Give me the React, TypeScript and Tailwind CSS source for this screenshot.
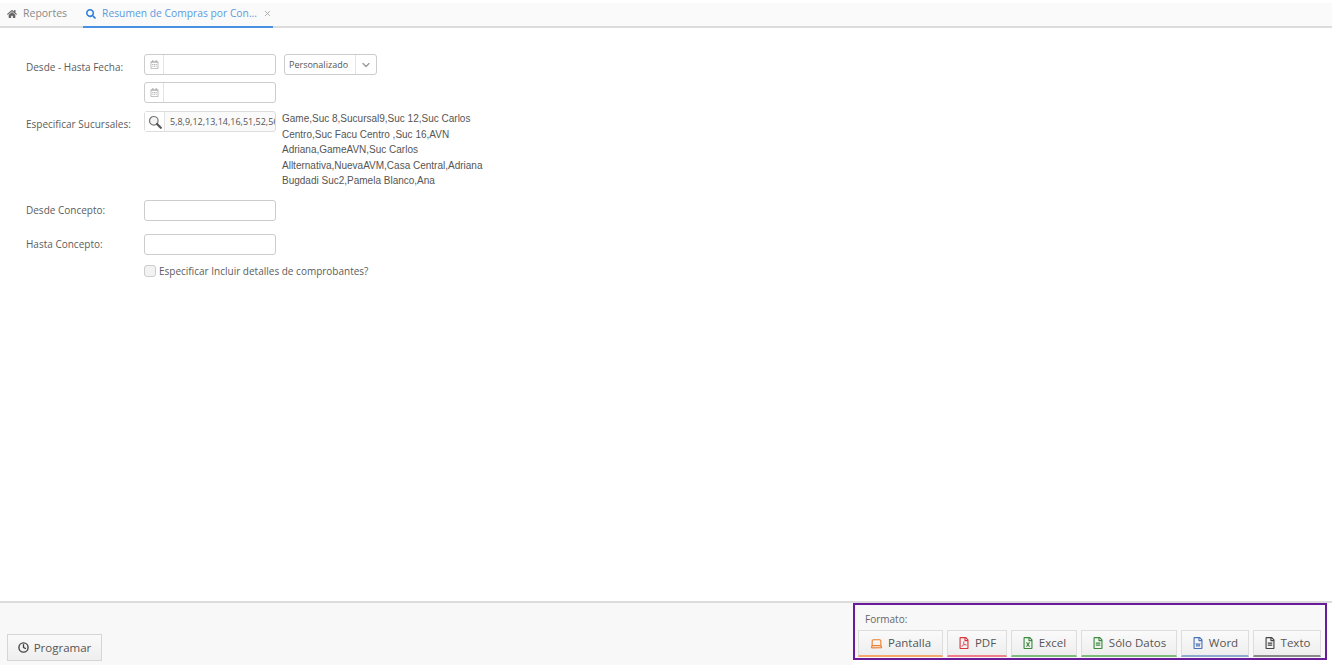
import { ChevronDown, Clock, Laptop, X } from "lucide-react"
import { FaHome, FaRegCalendarAlt, FaRegFileAlt, FaRegFileExcel, FaRegFilePdf, FaRegFileWord, FaSearch } from "react-icons/fa"

function DateInput() {
  return (
    <div className="flex h-[21px] w-[132px] rounded-[3px] border border-[#ccc] bg-white">
      <div className="flex w-[19px] items-center justify-center border-r border-[#e3e3e3]">
        <FaRegCalendarAlt className="h-[9px] w-[9px] text-[#b0b0b0]" />
      </div>
    </div>
  )
}

function FormatButton({ label, icon, line, width }: { label: string; icon: React.ReactNode; line: string; width: string }) {
  return (
    <div className={`flex h-[27px] items-center justify-center gap-[5px] border border-[#ddd] border-b-2 bg-gradient-to-b from-[#fafafa] to-[#eeeeee] text-[11.5px] text-[#555] ${line} ${width}`}>
      {icon}
      <span>{label}</span>
    </div>
  )
}

export default function App() {
  const labelCls = "text-[10px] leading-[14px] text-[#5c5c5c]"

  return (
    <div className="flex h-[670px] flex-col bg-white font-['Open_Sans',sans-serif]">
      <div className="mt-[3px] flex h-[25px] items-stretch border-b-2 border-[#dcdcdc] bg-[#fafafa] pb-[2px] text-[10.5px]">
        <div className="flex items-center gap-[6px] pl-[7px] pr-[16px] text-[#8a8a8a]">
          <FaHome className="h-[10px] w-[10px] text-[#666]" />
          <span>Reportes</span>
        </div>
        <div className="-mb-[4px] flex w-[190px] items-center gap-[6px] whitespace-nowrap border-b-2 border-[#4a90e2] pb-[2px] pl-[3px] text-[#5c9ae0]">
          <FaSearch className="h-[10px] w-[10px] text-[#2f7fd8]" />
          <span className="w-[155px] text-[10.3px]">Resumen de Compras por Con...</span>
          <X className="h-[9px] w-[9px] text-[#999]" />
        </div>
      </div>

      <div className="flex-1 pl-[26px] pt-[26px]">
        <div className="flex">
          <div className={`${labelCls} w-[118px] pt-[6px]`}>Desde - Hasta Fecha:</div>
          <div className="flex flex-col gap-[7px]">
            <div className="flex gap-[8px]">
              <DateInput />
              <div className="flex h-[21px] w-[93px] items-center rounded-[3px] border border-[#ccc] bg-white text-[9px] text-[#555]">
                <span className="flex-1 pl-[4px]">Personalizado</span>
                <div className="flex h-full w-[21px] items-center justify-center border-l border-[#e3e3e3]">
                  <ChevronDown className="h-[12px] w-[12px] text-[#999]" strokeWidth={2.5} />
                </div>
              </div>
            </div>
            <DateInput />
          </div>
        </div>

        <div className="mt-[8px] flex">
          <div className={`${labelCls} w-[118px] pt-[6px]`}>Especificar Sucursales:</div>
          <div className="flex h-[21px] w-[132px] rounded-[3px] border border-[#ddd] bg-[#fafafa]">
            <div className="flex w-[20px] items-center justify-center border-r border-[#e3e3e3] bg-white">
              <svg viewBox="0 0 14 14" className="h-[14px] w-[14px]">
                <circle cx="5.8" cy="5.8" r="4.3" fill="#f4f4f4" stroke="#777" strokeWidth="1.2" />
                <path d="M9 9 L12.8 12.8" stroke="#555" strokeWidth="2.2" strokeLinecap="round" />
              </svg>
            </div>
            <div className="flex-1 overflow-hidden whitespace-nowrap pl-[5px] pt-[3px] text-[9px] leading-[14px] text-[#555]">
              5,8,9,12,13,14,16,51,52,56
            </div>
          </div>
          <div className="ml-[6px] w-[205px] font-['Liberation_Sans',sans-serif] text-[10px] leading-[15.5px] text-[#555]">
            Game,Suc 8,Sucursal9,Suc 12,Suc Carlos Centro,Suc Facu Centro ,Suc 16,AVN Adriana,GameAVN,Suc Carlos Allternativa,NuevaAVM,Casa Central,Adriana Bugdadi Suc2,Pamela Blanco,Ana
          </div>
        </div>

        <div className="mt-[11px] flex items-center">
          <div className={`${labelCls} w-[118px]`}>Desde Concepto:</div>
          <div className="h-[21px] w-[132px] rounded-[3px] border border-[#ccc] bg-white" />
        </div>

        <div className="mt-[13px] flex items-center">
          <div className={`${labelCls} w-[118px]`}>Hasta Concepto:</div>
          <div className="h-[21px] w-[132px] rounded-[3px] border border-[#ccc] bg-white" />
        </div>

        <div className="ml-[118px] mt-[9px] flex items-center gap-[3px]">
          <div className="h-[12px] w-[12px] rounded-[3px] border border-[#ccc] bg-[#f2f2f2]" />
          <span className={labelCls}>Especificar Incluir detalles de comprobantes?</span>
        </div>
      </div>

      <div className="mb-[5px] flex h-[64px] items-stretch justify-between border-t-2 border-[#dcdcdc] bg-[#f8f8f8]">
        <div className="mb-[4px] ml-[7px] mt-auto flex h-[27px] w-[95px] items-center justify-center gap-[5px] border border-[#d5d5d5] bg-gradient-to-b from-[#fafafa] to-[#eeeeee] text-[11.5px] text-[#555]">
          <Clock className="h-[11px] w-[11px] text-[#444]" strokeWidth={3} />
          <span>Programar</span>
        </div>

        <div className="flex w-[479px] flex-col bg-white pr-[5px]">
          <div className="flex h-[57px] w-[474px] flex-col border-2 border-[#6a1b9a] bg-[#f8f8f8] pl-[3px]">
            <div className="pl-[7px] pt-[7px] text-[10px] leading-[14px] text-[#666]">Formato:</div>
            <div className="mt-[4px] flex gap-[4px]">
              <FormatButton label="Pantalla" line="border-b-[#f5a86a]" width="w-[85px]" icon={<Laptop className="h-[13px] w-[13px] text-[#f07f2e]" />} />
              <FormatButton label="PDF" line="border-b-[#f07f8a]" width="w-[60px]" icon={<FaRegFilePdf className="h-[12px] w-[12px] text-[#d9363e]" />} />
              <FormatButton label="Excel" line="border-b-[#7dbb7d]" width="w-[66px]" icon={<FaRegFileExcel className="h-[12px] w-[12px] text-[#3c8a3c]" />} />
              <FormatButton label="Sólo Datos" line="border-b-[#7dbb7d]" width="w-[96px]" icon={<FaRegFileAlt className="h-[12px] w-[12px] text-[#3c8a3c]" />} />
              <FormatButton label="Word" line="border-b-[#8fa8d0]" width="w-[68px]" icon={<FaRegFileWord className="h-[12px] w-[12px] text-[#4a72b8]" />} />
              <FormatButton label="Texto" line="border-b-[#888]" width="w-[68px]" icon={<FaRegFileAlt className="h-[12px] w-[12px] text-[#444]" />} />
            </div>
          </div>
        </div>
      </div>
    </div>
  )
}
